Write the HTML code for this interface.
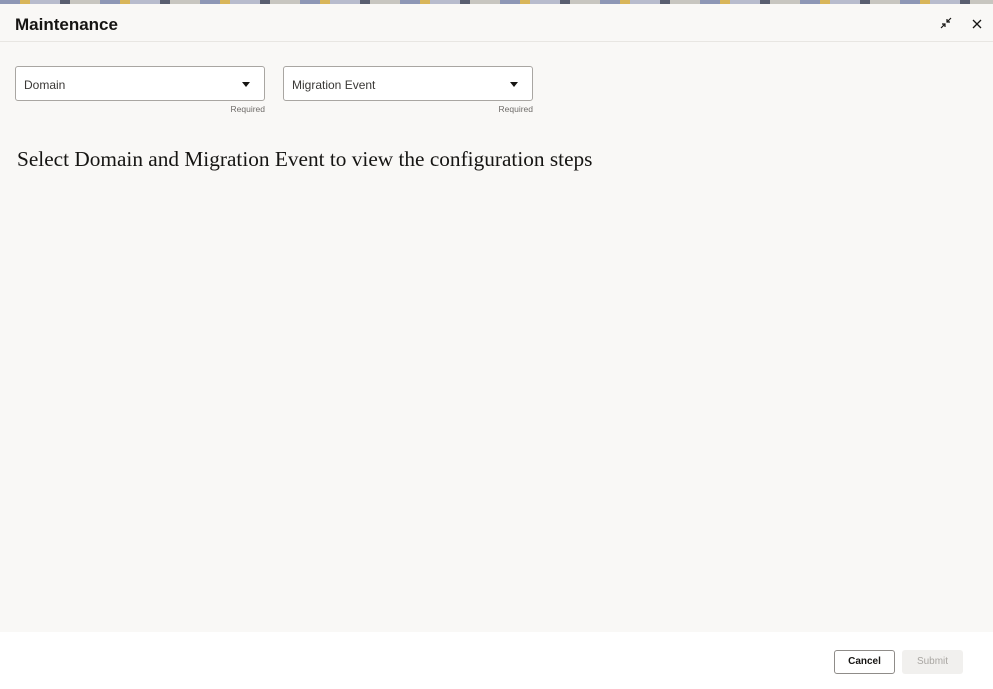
<!DOCTYPE html>
<html><head><meta charset="utf-8"><style>
*{box-sizing:border-box;margin:0;padding:0}
body{width:993px;height:689px;background:#f9f8f6;font-family:"Liberation Sans",sans-serif;position:relative;overflow:hidden}
.strip{position:absolute;top:0;left:0;width:993px;height:4px;background:repeating-linear-gradient(90deg,#8e97b5 0 20px,#d9b65a 20px 30px,#b8bccd 30px 60px,#5a5f70 60px 70px,#c8c6c0 70px 100px)}
.hdr{position:absolute;top:4px;left:0;width:993px;height:38px;border-bottom:1px solid #e8e6e2}
.hdr h1{position:absolute;left:15px;top:11px;font-size:17px;font-weight:bold;color:#161513}
.sel{position:absolute;top:66px;width:250px;height:35px;background:#fff;border:1px solid #a9a6a2;border-radius:3px;font-size:12px;color:#3a3836;padding:11px 8px}
.sel .ar{position:absolute;right:14px;top:15px;width:0;height:0;border-left:4px solid transparent;border-right:4px solid transparent;border-top:5px solid #161513}
.req{position:absolute;top:104px;font-size:8.5px;color:#6f6c69;text-align:right;width:60px}
.msg{position:absolute;left:17px;top:147px;font-family:"Liberation Serif",serif;font-size:21.3px;color:#161513;white-space:nowrap}
.foot{position:absolute;left:0;top:632px;width:993px;height:57px;background:#fff}
.btn{position:absolute;top:650px;height:24px;font-size:10px;border-radius:3px;text-align:center;line-height:22px}
</style></head><body>
<div class="strip"></div>
<div class="hdr"><h1>Maintenance</h1>
<svg style="position:absolute;left:939px;top:12px" width="14" height="14" viewBox="0 0 14 14" fill="none" stroke="#161513" stroke-width="1.2"><path d="M2 12L6 8M3 8h3v3M12 2L8 6M8 3v3h3"/></svg>
<svg style="position:absolute;left:972px;top:15px" width="10" height="10" viewBox="0 0 10 10" stroke="#161513" stroke-width="1.3"><path d="M1 1L9 9M9 1L1 9"/></svg>
</div>
<div class="sel" style="left:15px">Domain<span class="ar"></span></div>
<div class="req" style="left:205px">Required</div>
<div class="sel" style="left:283px">Migration Event<span class="ar"></span></div>
<div class="req" style="left:473px">Required</div>
<div class="msg">Select Domain and Migration Event to view the configuration steps</div>
<div class="foot"></div>
<div class="btn" style="left:834px;width:61px;border:1px solid #8f8c89;background:#fff;color:#161513;font-weight:bold">Cancel</div>
<div class="btn" style="left:902px;width:61px;background:#f1f0ee;color:#a9a6a2;line-height:24px">Submit</div>
</body></html>
